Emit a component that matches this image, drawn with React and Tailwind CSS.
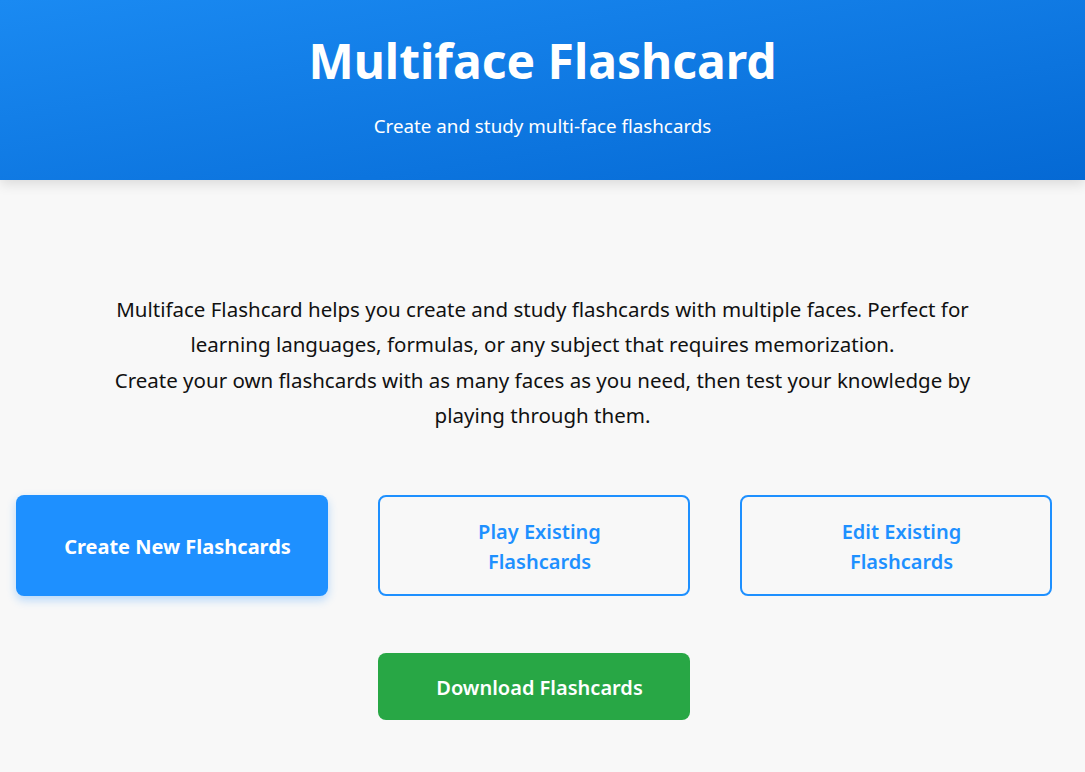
const App = () => {
  return (
    <div
      className="min-h-screen bg-[#f8f8f8] text-[#111]"
      style={{ fontFamily: "'Segoe UI', 'Noto Sans', sans-serif" }}
    >
      <header className="h-[180px] flex flex-col items-center pt-[27px] text-white bg-gradient-to-br from-[#1a8af2] to-[#0569d4] shadow-[0_4px_12px_rgba(0,0,0,0.12)]">
        <h1 className="text-[48px] leading-[67px] font-bold">Multiface Flashcard</h1>
        <p className="mt-[19px] text-[18.8px] leading-[27px]">Create and study multi-face flashcards</p>
      </header>

      <main className="pt-[112px]">
        <div className="max-w-[900px] mx-auto text-center text-[20.5px] leading-[35.3px]">
          <p>
            Multiface Flashcard helps you create and study flashcards with multiple faces. Perfect for
            learning languages, formulas, or any subject that requires memorization.
          </p>
          <p>
            Create your own flashcards with as many faces as you need, then test your knowledge by
            playing through them.
          </p>
        </div>

        <div className="mt-[62px] pl-[16px] grid grid-cols-[repeat(3,312px)] gap-x-[50px] gap-y-[57px]">
          <button className="h-[101px] rounded-lg bg-[#1e90ff] text-white text-[20px] font-bold pl-[11px] pt-[3px] shadow-[0_4px_10px_rgba(30,144,255,0.3)]">
            Create New Flashcards
          </button>
          <button className="h-[101px] rounded-lg border-2 border-[#1e90ff] text-[#1e90ff] text-[20px] font-semibold leading-[30px] pl-[85px] pr-[74px] pt-[3px]">
            Play Existing Flashcards
          </button>
          <button className="h-[101px] rounded-lg border-2 border-[#1e90ff] text-[#1e90ff] text-[20px] font-semibold leading-[30px] pl-[85px] pr-[74px] pt-[3px]">
            Edit Existing Flashcards
          </button>
          <button className="col-start-2 h-[67px] rounded-lg bg-[#28a745] text-white text-[20px] font-semibold pl-[11px] pt-[2px]">
            Download Flashcards
          </button>
        </div>
      </main>
    </div>
  );
};

export default App;
